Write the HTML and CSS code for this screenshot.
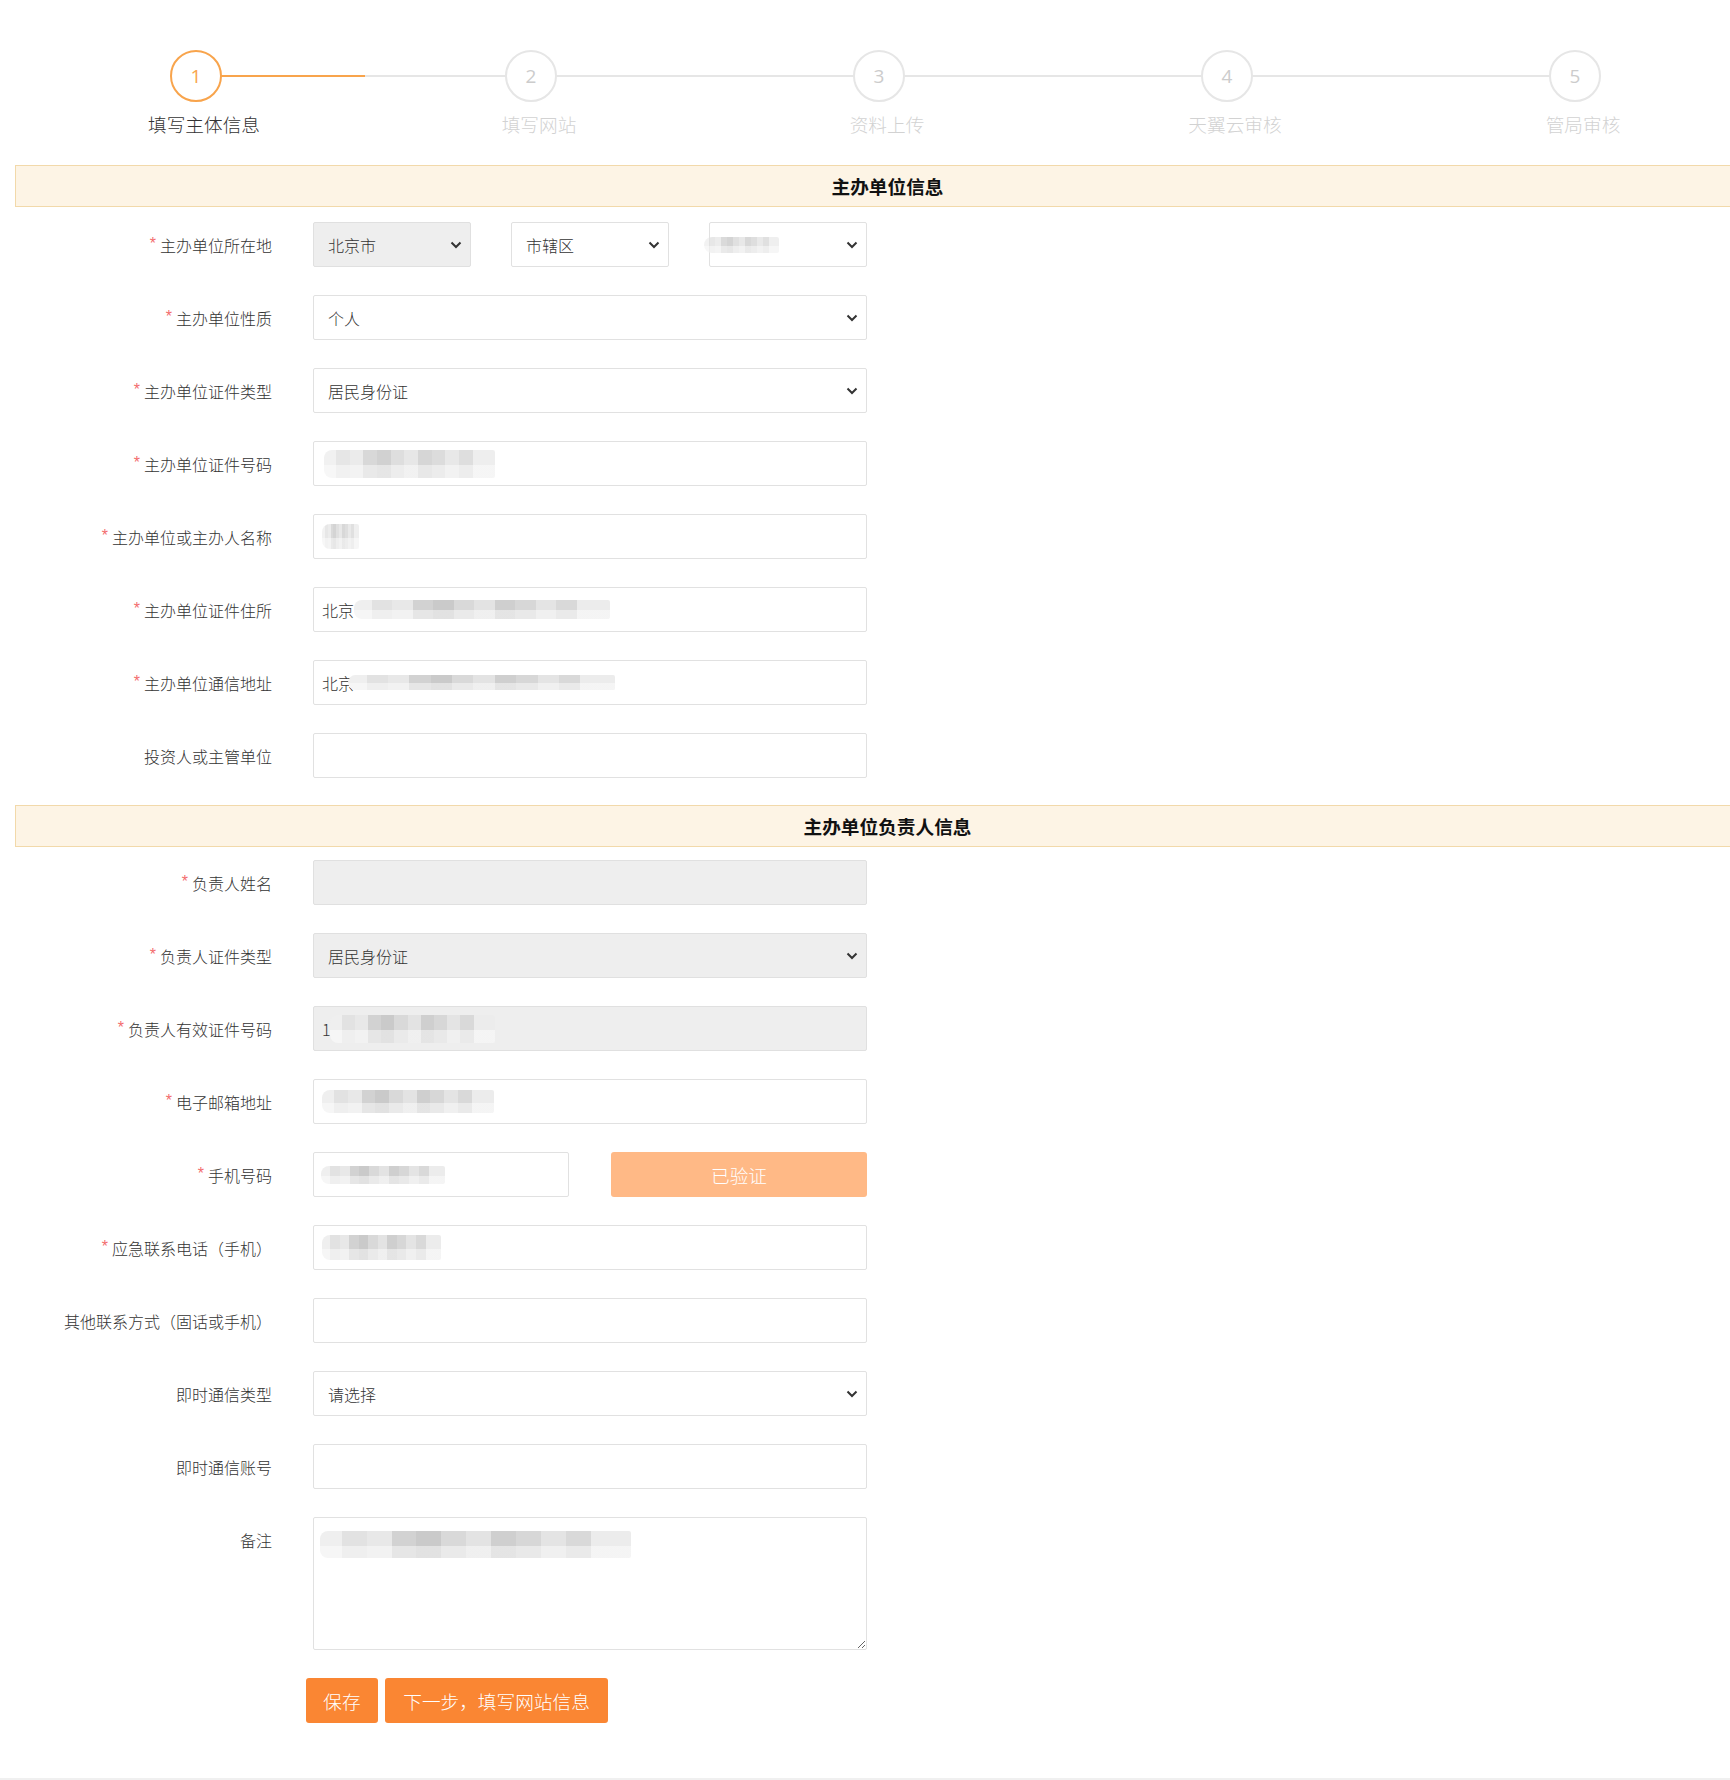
FILE: index.html
```html
<!DOCTYPE html>
<html lang="zh-CN">
<head>
<meta charset="utf-8">
<title>填写主体信息</title>
<link rel="stylesheet" href="styles.css">
</head>
<body>
<div class="page">
  <div class="steps">
    <div class="step active"><span class="step-circle">1</span><span class="step-label">填写主体信息</span></div>
    <div class="step"><span class="step-circle">2</span><span class="step-label">填写网站</span></div>
    <div class="step"><span class="step-circle">3</span><span class="step-label">资料上传</span></div>
    <div class="step"><span class="step-circle">4</span><span class="step-label">天翼云审核</span></div>
    <div class="step"><span class="step-circle">5</span><span class="step-label">管局审核</span></div>
  </div>

  <div class="section-title">主办单位信息</div>
  <div class="section first">
    <div class="row">
      <div class="label"><span class="req">*</span>主办单位所在地</div>
      <div class="control tri">
        <div class="field select disabled"><span>北京市</span><svg class="chev" width="12" height="8" viewBox="0 0 12 8"><path d="M1.5 1.5 L6 6 L10.5 1.5" fill="none" stroke="#333" stroke-width="2"/></svg></div>
        <div class="field select"><span>市辖区</span><svg class="chev" width="12" height="8" viewBox="0 0 12 8"><path d="M1.5 1.5 L6 6 L10.5 1.5" fill="none" stroke="#333" stroke-width="2"/></svg></div>
        <div class="field select"><span class="blur b-sel"></span><svg class="chev" width="12" height="8" viewBox="0 0 12 8"><path d="M1.5 1.5 L6 6 L10.5 1.5" fill="none" stroke="#333" stroke-width="2"/></svg></div>
      </div>
    </div>
    <div class="row">
      <div class="label"><span class="req">*</span>主办单位性质</div>
      <div class="control"><div class="field select"><span>个人</span><svg class="chev" width="12" height="8" viewBox="0 0 12 8"><path d="M1.5 1.5 L6 6 L10.5 1.5" fill="none" stroke="#333" stroke-width="2"/></svg></div></div>
    </div>
    <div class="row">
      <div class="label"><span class="req">*</span>主办单位证件类型</div>
      <div class="control"><div class="field select"><span>居民身份证</span><svg class="chev" width="12" height="8" viewBox="0 0 12 8"><path d="M1.5 1.5 L6 6 L10.5 1.5" fill="none" stroke="#333" stroke-width="2"/></svg></div></div>
    </div>
    <div class="row">
      <div class="label"><span class="req">*</span>主办单位证件号码</div>
      <div class="control"><div class="field"><span class="blur b-id"></span></div></div>
    </div>
    <div class="row">
      <div class="label"><span class="req">*</span>主办单位或主办人名称</div>
      <div class="control"><div class="field"><span class="blur b-name"></span></div></div>
    </div>
    <div class="row">
      <div class="label"><span class="req">*</span>主办单位证件住所</div>
      <div class="control"><div class="field"><span>北京</span><span class="blur b-addr"></span></div></div>
    </div>
    <div class="row">
      <div class="label"><span class="req">*</span>主办单位通信地址</div>
      <div class="control"><div class="field"><span>北京</span><span class="blur b-addr2"></span></div></div>
    </div>
    <div class="row">
      <div class="label">投资人或主管单位</div>
      <div class="control"><div class="field"></div></div>
    </div>
  </div>

  <div class="section-title">主办单位负责人信息</div>
  <div class="section second">
    <div class="row">
      <div class="label"><span class="req">*</span>负责人姓名</div>
      <div class="control"><div class="field disabled"></div></div>
    </div>
    <div class="row">
      <div class="label"><span class="req">*</span>负责人证件类型</div>
      <div class="control"><div class="field select disabled"><span>居民身份证</span><svg class="chev" width="12" height="8" viewBox="0 0 12 8"><path d="M1.5 1.5 L6 6 L10.5 1.5" fill="none" stroke="#333" stroke-width="2"/></svg></div></div>
    </div>
    <div class="row">
      <div class="label"><span class="req">*</span>负责人有效证件号码</div>
      <div class="control"><div class="field disabled"><span>1</span><span class="blur b-id2"></span></div></div>
    </div>
    <div class="row">
      <div class="label"><span class="req">*</span>电子邮箱地址</div>
      <div class="control"><div class="field"><span class="blur b-mail"></span></div></div>
    </div>
    <div class="row">
      <div class="label"><span class="req">*</span>手机号码</div>
      <div class="control duo">
        <div class="field"><span class="blur b-phone"></span></div>
        <button class="btn verified" type="button">已验证</button>
      </div>
    </div>
    <div class="row">
      <div class="label"><span class="req">*</span>应急联系电话（手机）</div>
      <div class="control"><div class="field"><span class="blur b-emg"></span></div></div>
    </div>
    <div class="row">
      <div class="label">其他联系方式（固话或手机）</div>
      <div class="control"><div class="field"></div></div>
    </div>
    <div class="row">
      <div class="label">即时通信类型</div>
      <div class="control"><div class="field select"><span>请选择</span><svg class="chev" width="12" height="8" viewBox="0 0 12 8"><path d="M1.5 1.5 L6 6 L10.5 1.5" fill="none" stroke="#333" stroke-width="2"/></svg></div></div>
    </div>
    <div class="row">
      <div class="label">即时通信账号</div>
      <div class="control"><div class="field"></div></div>
    </div>
    <div class="row">
      <div class="label">备注</div>
      <div class="control"><div class="field textarea"><span class="blur b-note"></span></div></div>
    </div>
  </div>

  <div class="actions">
    <button class="btn primary save" type="button">保存</button>
    <button class="btn primary next" type="button">下一步，填写网站信息</button>
  </div>
</div>
<div class="footer-line"></div>
</body>
</html>
```

FILE: styles.css
```css
html, body {
  margin: 0;
  padding: 0;
  background: #fff;
  overflow: hidden;
}

body {
  font-family: "Noto Sans CJK SC", "Noto Sans", "Liberation Sans", sans-serif;
  font-weight: 300;
  color: #333;
  width: 1730px;
  height: 1780px;
}

.page {
  width: 1744px;
  padding: 50px 0 0 15px;
}

/* ---------- steps ---------- */
.steps {
  position: relative;
  display: flex;
  gap: 58px;
  padding-left: 44px;
}

.steps::before {
  content: "";
  position: absolute;
  left: 182px;
  top: 25px;
  width: 1380px;
  height: 2px;
  background: #e6e6e6;
}

.steps::after {
  content: "";
  position: absolute;
  left: 182px;
  top: 25px;
  width: 168px;
  height: 2px;
  background: #f8a44c;
}

.step {
  width: 290px;
  display: flex;
  flex-direction: column;
  align-items: center;
}

.step:first-child {
  margin-right: -13px;
}

.step-circle {
  position: relative;
  z-index: 1;
  box-sizing: border-box;
  width: 52px;
  height: 52px;
  margin-right: 16px;
  border: 2px solid #e6e6e6;
  border-radius: 50%;
  background: #fff;
  display: flex;
  align-items: center;
  justify-content: center;
  font-size: 19px;
  font-weight: 400;
  color: #cccccc;
  font-family: "Open Sans", "Noto Sans", sans-serif;
}

.step-label {
  margin-top: 10px;
  font-size: 14pt;
  line-height: 24px;
  height: 24px;
  color: #d2d2d2;
  white-space: nowrap;
}

.step.active .step-circle {
  border-color: #f8a44c;
  color: #f8a44c;
}

.step.active .step-label {
  color: #333;
}

/* ---------- section titles ---------- */
.section-title {
  margin-top: 29px;
  box-sizing: border-box;
  height: 42px;
  line-height: 40px;
  border: 1px solid #f2d9aa;
  border-right: none;
  background: #fdf4e5;
  text-align: center;
  font-size: 14pt;
  font-weight: 700;
  color: #111;
}

.section + .section-title {
  margin-top: 27px;
}

.section.first {
  padding-top: 15px;
}

.section.second {
  padding-top: 13px;
}

/* ---------- rows ---------- */
.row {
  display: flex;
  align-items: flex-start;
  margin-bottom: 28px;
}

.section .row:last-child {
  margin-bottom: 0;
}

.label {
  width: 257px;
  height: 45px;
  flex: none;
  display: flex;
  align-items: center;
  justify-content: flex-end;
  font-size: 16px;
  line-height: 20px;
  color: #333;
  white-space: nowrap;
}

.req {
  color: #f36d6d;
  font-family: "Liberation Sans", sans-serif;
  font-weight: 400;
  font-size: 16px;
  line-height: 1;
  margin-right: 4px;
  align-self: center;
  position: relative;
  top: -1px;
}

.control {
  margin-left: 41px;
  width: 554px;
}

.control.tri {
  display: grid;
  grid-template-columns: 158px 158px 158px;
  column-gap: 40px;
}

.control.duo {
  display: grid;
  grid-template-columns: 256px 256px;
  column-gap: 42px;
}

.field {
  box-sizing: border-box;
  height: 45px;
  border: 1px solid #e1e1e1;
  border-radius: 2px;
  background: #fff;
  padding: 0 8px;
  display: flex;
  align-items: center;
  font-size: 16px;
  line-height: 20px;
  color: #333;
  white-space: nowrap;
  overflow: hidden;
}

.field.disabled {
  background: #eeeeee;
  border-color: #e0e0e0;
}

.field.select {
  padding: 0 8px 0 14px;
  justify-content: space-between;
  overflow: visible;
}

.chev {
  flex: none;
  display: block;
}

.field.textarea {
  height: 133px;
  align-items: flex-start;
  padding-top: 13px;
  resize: both;
  overflow: hidden;
}

/* ---------- blurred placeholders ---------- */
.blur {
  display: inline-block;
  flex: none;
  border-radius: 8px 2px 2px 8px;
  background:
    linear-gradient(180deg, rgba(255,255,255,0) 55%, rgba(255,255,255,0.45) 55%),
    linear-gradient(90deg,
      #efefef 0 7%, #e2e2e2 7% 15%, #e8e8e8 15% 23%, #d2d2d2 23% 31%,
      #cacaca 31% 39%, #d9d9d9 39% 47%, #e3e3e3 47% 55%, #cfcfcf 55% 63%,
      #d7d7d7 63% 71%, #e4e4e4 71% 79%, #d9d9d9 79% 87%, #ececec 87% 100%);
  filter: blur(0.4px);
}

.b-sel { width: 75px; height: 16px; margin-left: -20px; opacity: 0.8; }
.b-id { width: 171px; height: 28px; margin-left: 2px; opacity: 0.85; }
.b-name { width: 37px; height: 25px; opacity: 0.8; }
.b-addr { width: 256px; height: 19px; }
.b-addr2 { width: 267px; height: 15px; margin-left: -6px; }
.b-id2 { width: 165px; height: 28px; margin-left: -1px; }
.b-mail { width: 172px; height: 23px; }
.b-phone { width: 124px; height: 18px; margin-left: -1px; }
.b-emg { width: 119px; height: 25px; }
.b-note { width: 311px; height: 27px; margin-left: -2px; }

/* ---------- buttons ---------- */
.btn {
  box-sizing: border-box;
  height: 45px;
  border: none;
  border-radius: 3px;
  color: #fff;
  font-family: "Noto Sans CJK SC", "Noto Sans", sans-serif;
  font-weight: 300;
  font-size: 14pt;
  cursor: pointer;
}

.btn.verified {
  background: #ffb986;
  width: 256px;
}

.actions {
  display: flex;
  gap: 7px;
  margin-top: 28px;
  padding-left: 291px;
}

.btn.primary {
  background: #fa8633;
}

.btn.save {
  padding: 0 16px;
  width: 72px;
}

.btn.next {
  padding: 0 16px;
  width: 223px;
}

.footer-line {
  margin-top: 55px;
  height: 2px;
  background: #f0f0f0;
}
```
